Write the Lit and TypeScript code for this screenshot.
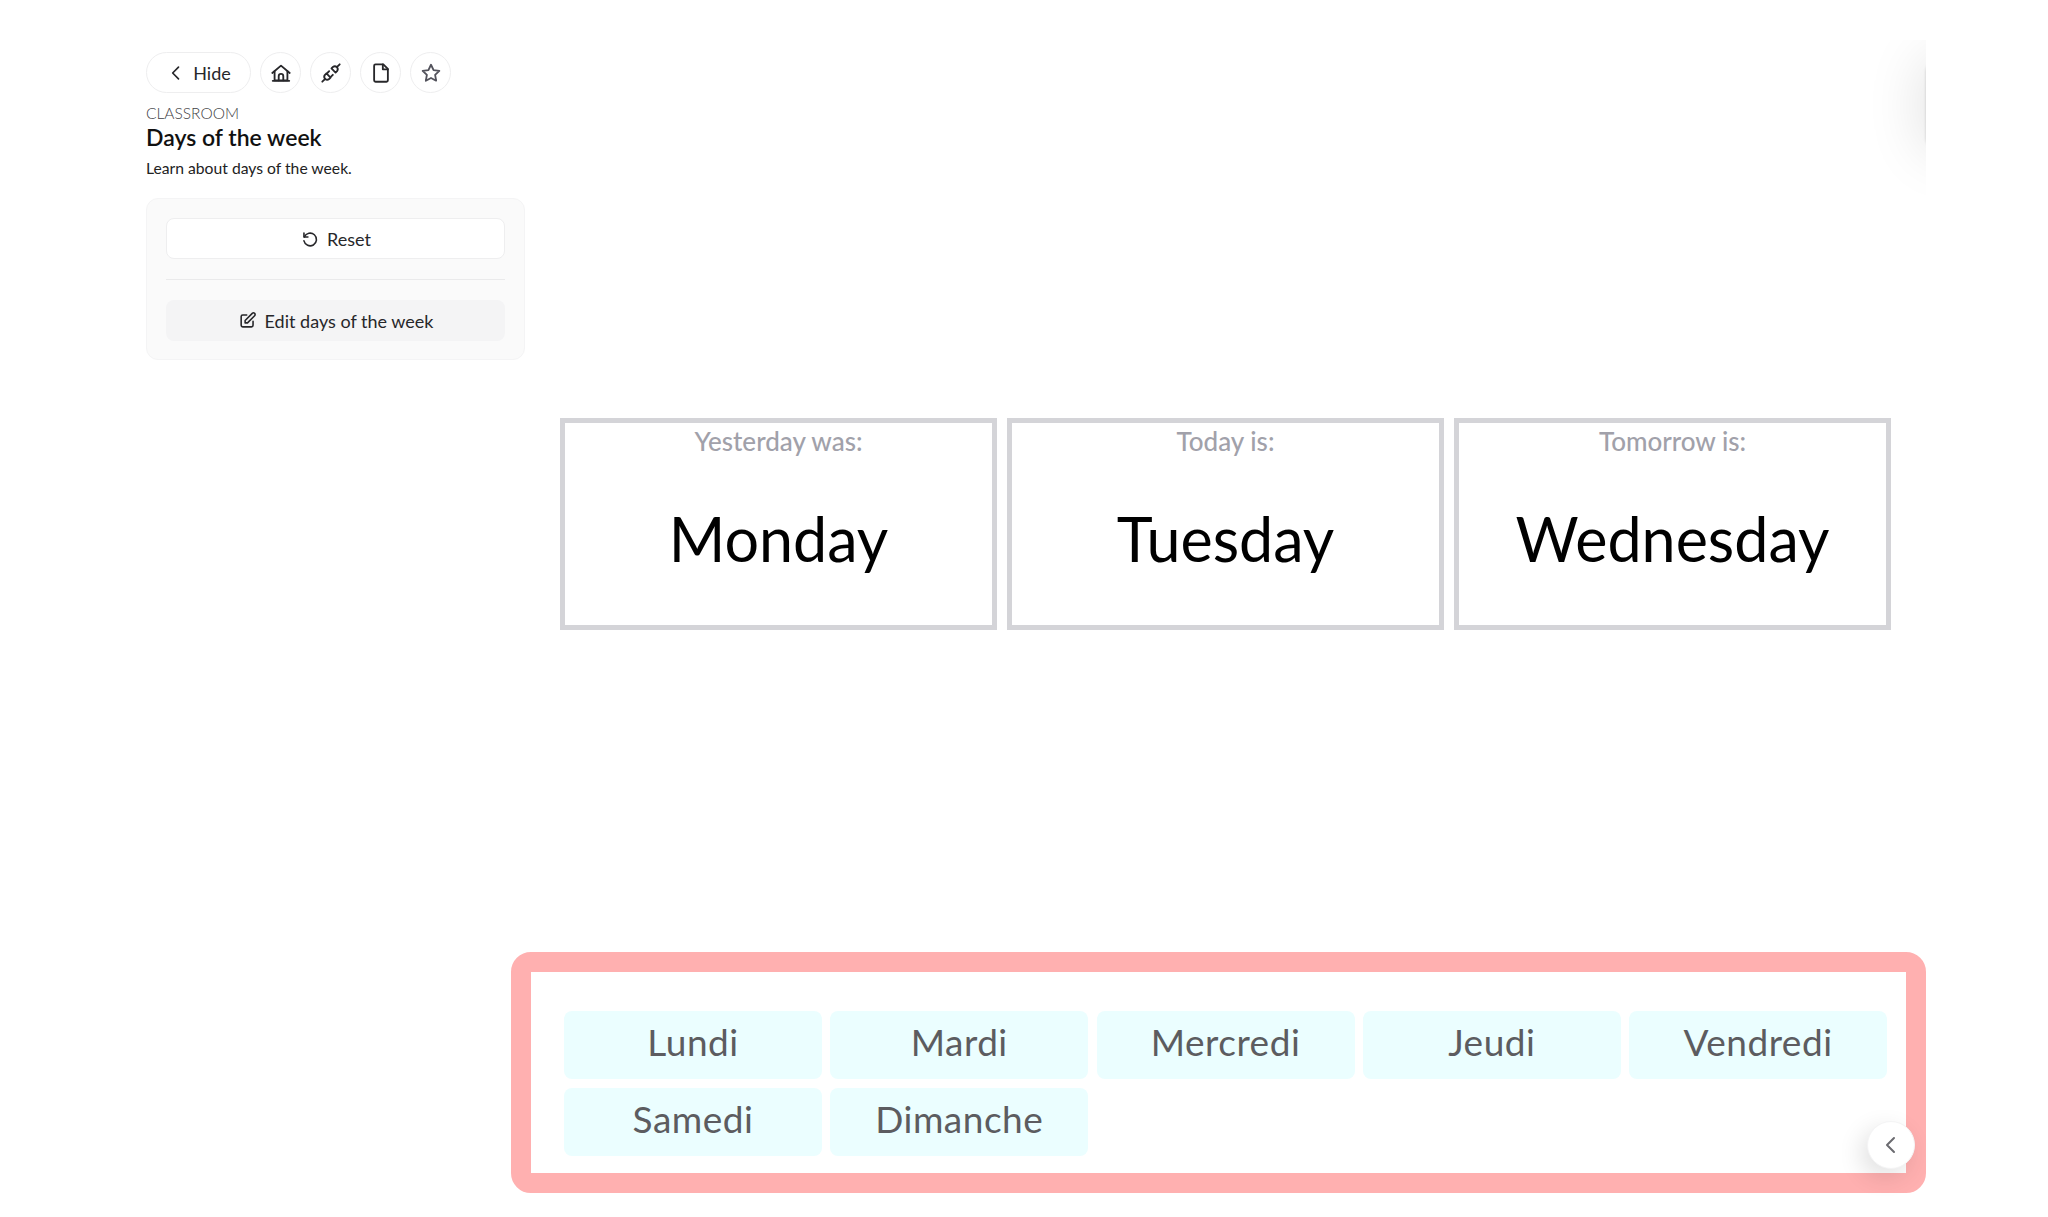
import { LitElement, html, css, svg } from "lit";
import { customElement } from "lit/decorators.js";

const ic = (body: unknown, size = 24, sw = 2) => html`<svg width=${size} height=${size} viewBox="0 0 24 24" fill="none" stroke="currentColor" stroke-width=${sw} stroke-linecap="round" stroke-linejoin="round">${body}</svg>`;

const icons = {
  back: svg`<path d="M15 5l-7 7 7 7"/>`,
  home: svg`<path d="M2.5 12 12 4l9.5 8"/><path d="M5 10v10h14V10"/><path d="M9.5 20v-4.5a2.5 2.5 0 0 1 5 0V20"/><path d="M3 20.5h18"/>`,
  plug: svg`<path d="M7 12.5l4.5 4.5-1.6 1.6a3.2 3.2 0 0 1-4.5-4.5z"/><path d="M17 11.5 12.5 7l1.6-1.6a3.2 3.2 0 0 1 4.5 4.5z"/><path d="M2.5 21.5l2.9-2.9M18.6 5.4l2.9-2.9M10 10l-2 2M14 14l-2 2"/>`,
  file: svg`<path d="M6 2.5h8.5l5 5V20a1.5 1.5 0 0 1-1.5 1.5H6A1.5 1.5 0 0 1 4.5 20V4A1.5 1.5 0 0 1 6 2.5z"/><path d="M14 2.5V8h5.5"/>`,
  star: svg`<path d="M12 3l2.8 5.8 6.3.9-4.6 4.4 1.1 6.3-5.600-3-5.600 3 1.100-6.300-4.600-4.400 6.300-.900z"/>`,
  reset: svg`<path d="M5 5v5h5"/><path d="M5.5 10A8 8 0 1 1 5 15"/>`,
  edit: svg`<path d="M11 5H6a2 2 0 0 0-2 2v11a2 2 0 0 0 2 2h11a2 2 0 0 0 2-2v-5"/><path d="M9 15v-3l9-9a2 2 0 0 1 3 3l-9 9z"/>`,
};

@customElement("app-root")
export class AppRoot extends LitElement {
  static styles = css`
    :host { display: block; position: relative; width: 2048px; height: 1217px; overflow: hidden; background: #fff; font-family: "Lato", "Noto Sans", sans-serif; color: #111; }
    .page { display: flex; flex-direction: column; align-items: flex-start; padding: 52px 0 0 146px; box-sizing: border-box; height: 100%; }
    .toolbar { display: flex; gap: 9px; height: 41px; }
    .pill, .round { display: flex; align-items: center; justify-content: center; border: 1px solid #eeeeef; background: #fff; box-sizing: border-box; height: 41px; border-radius: 21px; color: #27272a; }
    .pill { width: 105px; gap: 7px; font-size: 18px; }
    .round { width: 41px; }
    .round.star { color: #52525b; }
    .eyebrow { font-size: 15.5px; font-weight: 300; color: #3f3f46; margin-top: 10px; line-height: 20px; }
    h1 { margin: 1px 0 0; font-size: 23px; font-weight: 600; line-height: 27px; color: #111; }
    .desc { font-size: 15.7px; line-height: 20px; margin-top: 7px; color: #222; }
    .panel { width: 379px; box-sizing: border-box; margin-top: 20px; padding: 19px 19px 0; background: #fafafa; border: 1px solid #f4f4f5; border-radius: 12px; height: 162px; }
    .btn { display: flex; align-items: center; justify-content: center; gap: 8px; height: 41px; border-radius: 8px; font-size: 18px; color: #27272a; box-sizing: border-box; }
    .btn.reset { background: #fff; border: 1px solid #eeeeef; }
    .btn.edit { background: #f4f4f5; }
    .rule { height: 1px; background: #eaeaeb; margin: 20px 0; }
    .board { display: grid; grid-template-columns: repeat(3, 437px); gap: 10px; margin: 58px 0 0 414px; }
    .card { height: 212px; box-sizing: border-box; border: 5px solid #d4d4d8; text-align: center; }
    .label { font-size: 26px; line-height: 30px; margin-top: 3px; color: #a1a1aa; font-weight: 500; }
    .day { font-size: 61px; line-height: 76px; margin-top: 45px; color: #000; }
    .tray { width: 1415px; height: 241px; box-sizing: border-box; margin: 322px 0 0 365px; border: 20px solid #ffb0b0; border-radius: 20px; background: #fff; position: relative; }
    .tiles { display: grid; grid-template-columns: repeat(5, 258px); gap: 9px 8.25px; padding: 39px 0 0 33px; }
    .tile { height: 68px; display: flex; align-items: center; justify-content: center; background: #ebfeff; border-radius: 8px; font-size: 37px; letter-spacing: 0.5px; color: #5c5c60; padding-bottom: 8px; box-sizing: border-box; }
    .close { position: absolute; right: -9px; bottom: 4px; width: 48px; height: 48px; border-radius: 50%; display: flex; align-items: center; justify-content: center; background: #fff; border: 1px solid #f4f4f5; box-sizing: border-box; color: #6b6b70; box-shadow: -6px 8px 24px rgba(0,0,0,.12); }
    .clip { position: absolute; left: 1800px; top: 40px; width: 126px; height: 160px; overflow: hidden; }
    .sheet { position: absolute; left: 126px; top: 20px; width: 60px; height: 90px; border-radius: 12px; box-shadow: 0 0 60px rgba(0,0,0,.14), 0 0 3px rgba(0,0,0,.18); }
  `;

  render() {
    const cards = [["Yesterday was:", "Monday"], ["Today is:", "Tuesday"], ["Tomorrow is:", "Wednesday"]];
    const tiles = ["Lundi", "Mardi", "Mercredi", "Jeudi", "Vendredi", "Samedi", "Dimanche"];
    return html`
      <div class="page">
        <div class="toolbar">
          <div class="pill">${ic(icons.back, 20)}<span>Hide</span></div>
          <div class="round">${ic(icons.home, 22)}</div>
          <div class="round">${ic(icons.plug, 22)}</div>
          <div class="round">${ic(icons.file, 22)}</div>
          <div class="round star">${ic(icons.star, 22)}</div>
        </div>
        <div class="eyebrow">CLASSROOM</div>
        <h1>Days of the week</h1>
        <div class="desc">Learn about days of the week.</div>
        <div class="panel">
          <div class="btn reset">${ic(icons.reset, 19)}<span>Reset</span></div>
          <div class="rule"></div>
          <div class="btn edit">${ic(icons.edit, 19)}<span>Edit days of the week</span></div>
        </div>
        <div class="board">
          ${cards.map(([l, d]) => html`<div class="card"><div class="label">${l}</div><div class="day">${d}</div></div>`)}
        </div>
        <div class="tray">
          <div class="tiles">${tiles.map((t) => html`<div class="tile">${t}</div>`)}</div>
          <div class="close">${ic(icons.back, 24)}</div>
        </div>
      </div>
      <div class="clip"><div class="sheet"></div></div>
    `;
  }
}
